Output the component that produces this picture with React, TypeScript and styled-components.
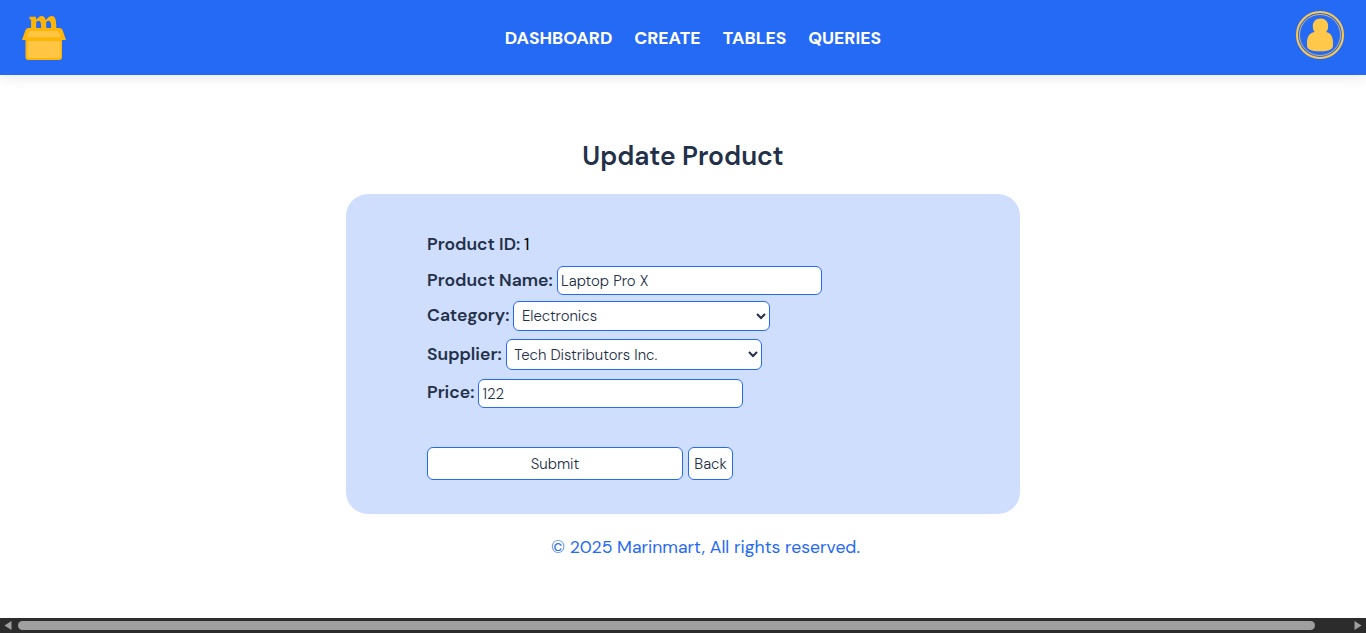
import React from "react";
import styled, { createGlobalStyle } from "styled-components";

const GlobalStyle = createGlobalStyle`
  * { box-sizing: border-box; }
  body { margin: 0; background: #fff; overflow: hidden; }
  body, input, select, button { font-family: "DM Sans", Inter, "Liberation Sans", sans-serif; }
`;

const Page = styled.div`
  display: flex;
  flex-direction: column;
  height: 633px;
  overflow: hidden;
`;

const Header = styled.header`
  display: flex;
  flex: none;
  justify-content: space-between;
  height: 75px;
  padding: 11px 22px 0;
  background: #256af4;
  box-shadow: 0 0 16px rgba(0, 0, 0, 0.12);
`;

const Nav = styled.nav`
  display: flex;
  gap: 22px;
  padding-left: 24px;
  line-height: 54px;
`;

const NavLink = styled.a<{ $width: number }>`
  width: ${(p) => p.$width}px;
  color: #fff;
  font-size: 17.6px;
  font-weight: 700;
  white-space: nowrap;
`;

const Main = styled.main`
  display: flex;
  flex: 1;
  flex-direction: column;
  align-items: center;
`;

const Title = styled.h1`
  margin: 62px 0 19px;
  color: #233049;
  font-size: 26.4px;
  font-weight: 600;
  line-height: 38px;
`;

const Card = styled.form`
  width: 674px;
  height: 320px;
  padding: 34px 81px 0;
  border-radius: 22px;
  background: #cfdefc;
`;

const Row = styled.div<{ $height: number; $gap: number }>`
  display: flex;
  height: ${(p) => p.$height}px;
  margin-bottom: ${(p) => p.$gap}px;
`;

const Label = styled.label<{ $width: number; $line: number }>`
  width: ${(p) => p.$width}px;
  color: #233049;
  font-size: 17.6px;
  font-weight: 600;
  line-height: ${(p) => p.$line}px;
  white-space: nowrap;
`;

const Value = styled.span`
  color: #000;
  font-size: 17.6px;
  line-height: 32px;
`;

const TextInput = styled.input`
  width: 265px;
  height: 100%;
  padding: 1px 3px;
  border: 1px solid #256af4;
  border-radius: 6px;
  outline: none;
  background: #fff;
  color: #233049;
  font-size: 14.9px;
  font-weight: 300;
`;

const Select = styled.select<{ $width: number }>`
  width: ${(p) => p.$width}px;
  height: 100%;
  padding: 0 5px 0 3.600px;
  border: 1px solid #256af4;
  border-radius: 6px;
  background: #fff;
  color: #233049;
  font-size: 14.9px;
  font-weight: 300;
`;

const Actions = styled.div`
  display: flex;
  gap: 5px;
  margin-top: 39px;
`;

const Button = styled.button<{ $width: number }>`
  width: ${(p) => p.$width}px;
  height: 33px;
  padding: 0;
  border: 1px solid #256af4;
  border-radius: 6px;
  background: #fff;
  color: #233049;
  font-size: 14.9px;
  font-weight: 300;
`;

const Footer = styled.footer`
  margin-top: 20px;
  padding-left: 45px;
  color: #256af4;
  font-size: 17.6px;
  line-height: 26px;
`;

const ScrollTrack = styled.div`
  display: flex;
  flex: none;
  align-items: center;
  justify-content: space-between;
  height: 15px;
  padding: 0 4px;
  background: #2c2c2c;
`;

const ScrollThumb = styled.div`
  width: 1297px;
  height: 9px;
  margin-right: 33px;
  border-radius: 5px;
  background: #9f9f9f;
`;

const LogoSvg = styled.svg`
  overflow: visible;
`;

const Logo = () => (
  <LogoSvg width="44" height="50" viewBox="22 11 44 50">
    <text transform="translate(28.500 49) scale(1 1.950)" fill="#ffb508" fontFamily="Liberation Serif, serif" fontSize="36" fontWeight="700">m</text>
    <path d="M28.500 28h31q2 0 3 2l3.500 10H22l3.500-10q1-2 3-2z" fill="#ffb508" />
    <path d="M29.500 31h28.500l3 6.300H26.500z" fill="#ffc543" />
    <rect x="25.500" y="38" width="36.500" height="22" rx="3" fill="#ffb508" />
    <rect x="27.500" y="41" width="33" height="17" rx="1.500" fill="#ffc543" />
  </LogoSvg>
);

const Avatar = () => (
  <svg width="48" height="48" viewBox="0 0 48 48" fill="none" stroke="#ffc84a">
    <circle cx="24" cy="24" r="23" strokeWidth="2" />
    <circle cx="24" cy="24" r="20.500" strokeWidth="0.800" />
    <path d="M24.500 7.500c4.800 0 7.700 3.500 7.700 7.500 0 2.600-.8 4.500-2 6 4.800 1 6.800 5.200 6.800 10.200v3c0 4.200-4 6.100-13 6.100S11 38.400 11 34.200v-3c0-5 2.400-9.200 7.600-10.200-1.200-1.500-1.800-3.400-1.800-6 0-4 2.900-7.500 7.700-7.500z" fill="#ffc84a" stroke="none" />
  </svg>
);

const Arrow = ({ right = false }: { right?: boolean }) => (
  <svg width="8" height="9" viewBox="0 0 8 9">
    <path d={right ? "M0.500 0v9L7.500 4.500z" : "M7.500 0v9L0.500 4.500z"} fill="#9f9f9f" />
  </svg>
);

export default function App() {
  return (
    <Page>
      <GlobalStyle />
      <Header>
        <Logo />
        <Nav>
          <NavLink $width={107.500}>DASHBOARD</NavLink>
          <NavLink $width={66.500}>CREATE</NavLink>
          <NavLink $width={63.500}>TABLES</NavLink>
          <NavLink $width={73}>QUERIES</NavLink>
        </Nav>
        <Avatar />
      </Header>
      <Main>
        <Title>Update Product</Title>
        <Card>
          <Row $height={32} $gap={6}>
            <Label $width={97} $line={32}>Product ID:</Label>
            <Value>1</Value>
          </Row>
          <Row $height={29} $gap={6}>
            <Label $width={130} $line={28}>Product Name:</Label>
            <TextInput defaultValue="Laptop Pro X" />
          </Row>
          <Row $height={30} $gap={8}>
            <Label $width={86.300} $line={29}>Category:</Label>
            <Select $width={256.500}><option>Electronics</option></Select>
          </Row>
          <Row $height={31} $gap={9}>
            <Label $width={78.700} $line={30}>Supplier:</Label>
            <Select $width={256.500}><option>Tech Distributors Inc.</option></Select>
          </Row>
          <Row $height={29} $gap={0}>
            <Label $width={51.450} $line={27}>Price:</Label>
            <TextInput defaultValue="122" />
          </Row>
          <Actions>
            <Button type="button" $width={256}>Submit</Button>
            <Button type="button" $width={45}>Back</Button>
          </Actions>
        </Card>
        <Footer>© 2025 Marinmart, All rights reserved.</Footer>
      </Main>
      <ScrollTrack>
        <Arrow />
        <ScrollThumb />
        <Arrow right />
      </ScrollTrack>
    </Page>
  );
}
